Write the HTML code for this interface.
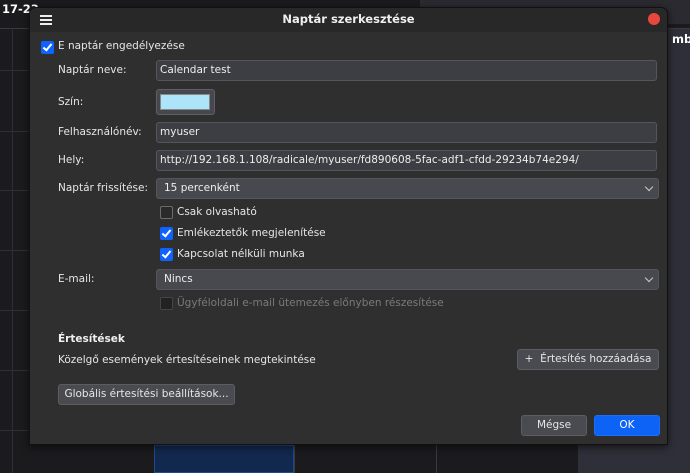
<!DOCTYPE html>
<html><head><meta charset="utf-8"><style>
*{box-sizing:border-box;margin:0;padding:0}
body{width:690px;height:473px;overflow:hidden;background:#1b1b1e;font-family:"DejaVu Sans","Liberation Sans",sans-serif;font-size:10.5px;color:#e6e6e6;position:relative}
.a{position:absolute;white-space:nowrap}
.vl{position:absolute;width:1px;background:#2e2e34;top:28px;bottom:0}
.hl{position:absolute;height:1px;background:#2e2e34;left:0;right:0}
#dlg{position:absolute;left:29px;top:7px;width:639px;height:438px;background:#2f2f2f;border:1px solid #111;border-radius:7px 7px 0 0;box-shadow:0 2px 8px rgba(0,0,0,.6)}
#tb{position:absolute;left:0;top:0;right:0;height:24px;background:#282828;border-radius:7px 7px 0 0}
.in{position:absolute;height:21px;background:#3d3e43;border:1px solid #55565c;border-radius:3px;padding-left:3px;line-height:19px;color:#eee;white-space:nowrap}
.cb{position:absolute;width:13px;height:13px;border-radius:2px}
.cb.on{background:#0f62fe}
.cb.off{border:1px solid #6b6b6b;background:#2a2a2a}
.cb.on:after{content:"";position:absolute;left:4px;top:1px;width:3px;height:7px;border:solid #fff;border-width:0 2px 2px 0;transform:rotate(40deg)}
.btn{position:absolute;height:21px;background:#4a4b51;border:1px solid #5c5d63;border-radius:3px;text-align:center;line-height:19px;color:#e6e6e6;white-space:nowrap}
.chev{position:absolute;right:6px;top:5px;width:6px;height:6px;border:solid #ccc;border-width:0 1px 1px 0;transform:rotate(45deg)}
</style></head><body>
<div class="a" style="left:2px;top:2px;color:#fff;font-weight:bold;font-size:11.5px">17-23</div>
<div style="position:absolute;left:420px;top:0;width:270px;height:24px;background:#2a2a30"></div>
<div style="position:absolute;left:578px;top:28px;width:112px;height:445px;background:#2e2f38"></div>
<div class="hl" style="top:28px;background:#3a3a40"></div>
<div class="hl" style="top:70px"></div><div class="hl" style="top:131px"></div><div class="hl" style="top:190px"></div><div class="hl" style="top:250px"></div><div class="hl" style="top:310px"></div><div class="hl" style="top:370px"></div><div class="hl" style="top:430px"></div>
<div class="vl" style="left:12px"></div>
<div style="position:absolute;left:154px;top:445px;width:140px;height:28px;background:#13284f;border:1px solid #1e4a8e"></div>
<div style="position:absolute;left:294px;top:445px;width:1px;height:28px;background:#3a3a40"></div>
<div style="position:absolute;left:436px;top:445px;width:1px;height:28px;background:#3a3a40"></div>
<div class="a" style="left:672px;top:32px;color:#fff;font-weight:bold;font-size:11.5px">mba</div>
<div id="dlg">
<div id="tb"></div>
<div style="position:absolute;left:10px;top:7px;width:12px;height:2px;background:#eee;box-shadow:0 4px 0 #eee,0 8px 0 #eee"></div>
<div class="a" style="left:0;right:0;top:4px;text-align:center;font-weight:bold;color:#f0f0f0;font-size:11.5px">Naptár szerkesztése</div>
<div style="position:absolute;left:618px;top:5px;width:12px;height:12px;border-radius:50%;background:#e8473f"></div>
<div class="cb on" style="left:11px;top:33px"></div>
<div class="a" style="left:28px;top:32px">E naptár engedélyezése</div>
<div class="a" style="left:28px;top:56px">Naptár neve:</div>
<div class="in" style="left:126px;top:52px;width:501px">Calendar test</div>
<div class="a" style="left:28px;top:88px">Szín:</div>
<div style="position:absolute;left:126px;top:81px;width:59px;height:26px;background:#47484d;border:1px solid #5e5f64;border-radius:3px"><div style="position:absolute;left:3px;top:4px;width:50px;height:16px;background:#aee4fa;border:1px solid #888"></div></div>
<div class="a" style="left:28px;top:118px">Felhasználónév:</div>
<div class="in" style="left:126px;top:114px;width:501px">myuser</div>
<div class="a" style="left:28px;top:146px">Hely:</div>
<div class="in" style="left:126px;top:142px;width:501px">http://192.168.1.108/radicale/myuser/fd890608-5fac-adf1-cfdd-29234b74e294/</div>
<div class="a" style="left:28px;top:174px">Naptár frissítése:</div>
<div class="in" style="left:126px;top:170px;width:503px;padding-left:7px;background:#48494f">15 percenként<div class="chev"></div></div>
<div class="cb off" style="left:130px;top:198px"></div>
<div class="a" style="left:147px;top:198px">Csak olvasható</div>
<div class="cb on" style="left:130px;top:219px"></div>
<div class="a" style="left:147px;top:219px">Emlékeztetők megjelenítése</div>
<div class="cb on" style="left:130px;top:240px"></div>
<div class="a" style="left:147px;top:240px">Kapcsolat nélküli munka</div>
<div class="a" style="left:28px;top:265px">E-mail:</div>
<div class="in" style="left:126px;top:261px;width:503px;padding-left:7px;background:#48494f">Nincs<div class="chev"></div></div>
<div class="cb off" style="left:130px;top:289px;background:#222;border-color:#444"></div>
<div class="a" style="left:147px;top:289px;color:#7a7a7a">Ügyféloldali e-mail ütemezés előnyben részesítése</div>
<div class="a" style="left:28px;top:325px;font-weight:bold;color:#f0f0f0">Értesítések</div>
<div class="a" style="left:28px;top:346px">Közelgő események értesítéseinek megtekintése</div>
<div class="btn" style="left:487px;top:341px;width:142px">+&nbsp; Értesítés hozzáadása</div>
<div class="btn" style="left:28px;top:376px;width:177px">Globális értesítési beállítások...</div>
<div class="btn" style="left:491px;top:407px;width:66px">Mégse</div>
<div class="btn" style="left:564px;top:407px;width:66px;background:#0c63f5;border-color:#1a6ef7;color:#fff">OK</div>
</div>
</body></html>
